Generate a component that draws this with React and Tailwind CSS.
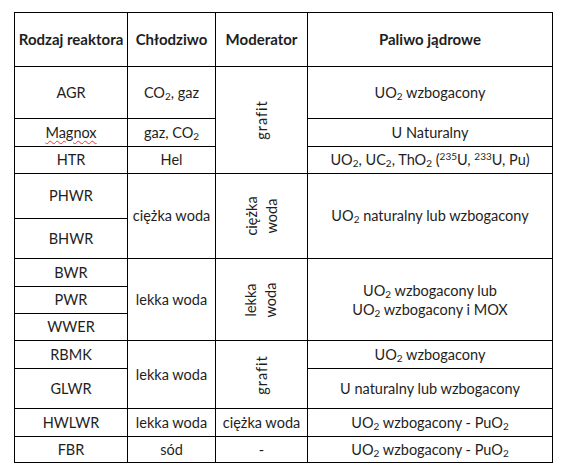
import React from "react";

const Sub = () => (
  <span className="relative top-[2px] text-[10px] leading-none">2</span>
);
const Sup = ({ children }) => (
  <span className="relative -top-[5px] text-[10px] leading-none">{children}</span>
);

const Cell = ({ className = "", children }) => (
  <div className={`bg-white flex items-center justify-center text-center ${className}`}>
    {children}
  </div>
);

const Vert = ({ className = "", children }) => (
  <div className={`-rotate-90 whitespace-nowrap text-center leading-[20px] ${className}`}>{children}</div>
);

export default function App() {
  return (
    <div className="w-[573px] h-[467px] bg-white pl-[14px] pt-[12px] text-[14.5px] text-[#1e1e1e] font-['Lato','Liberation_Sans',sans-serif]">
      <div className="grid w-[539px] bg-black p-px gap-px grid-cols-[112px_87px_91px_244px] grid-rows-[53px_51px_27px_26px_44px_39px_27px_26px_26px_27px_39px_27px_25px]">
        {/* header */}
        <Cell className="col-start-1 row-start-1 font-bold text-[15px]">Rodzaj reaktora</Cell>
        <Cell className="col-start-2 row-start-1 font-bold text-[15px]">Chłodziwo</Cell>
        <Cell className="col-start-3 row-start-1 font-bold text-[15px]">Moderator</Cell>
        <Cell className="col-start-4 row-start-1 font-bold text-[15px]">Paliwo jądrowe</Cell>

        {/* AGR / Magnox / HTR */}
        <Cell className="col-start-1 row-start-2">AGR</Cell>
        <Cell className="col-start-2 row-start-2">
          <span>CO<Sub />, gaz</span>
        </Cell>
        <Cell className="col-start-3 row-start-2 row-span-3">
          <Vert className="tracking-[1px]">grafit</Vert>
        </Cell>
        <Cell className="col-start-4 row-start-2">
          <span>UO<Sub /> wzbogacony</span>
        </Cell>

        <Cell className="col-start-1 row-start-3">
          <span className="underline decoration-wavy decoration-red-500 decoration-1 underline-offset-2">Magnox</span>
        </Cell>
        <Cell className="col-start-2 row-start-3">
          <span>gaz, CO<Sub /></span>
        </Cell>
        <Cell className="col-start-4 row-start-3">U Naturalny</Cell>

        <Cell className="col-start-1 row-start-4">HTR</Cell>
        <Cell className="col-start-2 row-start-4">Hel</Cell>
        <Cell className="col-start-4 row-start-4">
          <span>
            UO<Sub />, UC<Sub />, ThO<Sub /> (<Sup>235</Sup>U, <Sup>233</Sup>U, Pu)
          </span>
        </Cell>

        {/* PHWR / BHWR */}
        <Cell className="col-start-1 row-start-5">PHWR</Cell>
        <Cell className="col-start-1 row-start-6">BHWR</Cell>
        <Cell className="col-start-2 row-start-5 row-span-2">ciężka woda</Cell>
        <Cell className="col-start-3 row-start-5 row-span-2">
          <Vert>
            ciężka
            <br />
            woda
          </Vert>
        </Cell>
        <Cell className="col-start-4 row-start-5 row-span-2">
          <span>UO<Sub /> naturalny lub wzbogacony</span>
        </Cell>

        {/* BWR / PWR / WWER */}
        <Cell className="col-start-1 row-start-7">BWR</Cell>
        <Cell className="col-start-1 row-start-8">PWR</Cell>
        <Cell className="col-start-1 row-start-9">WWER</Cell>
        <Cell className="col-start-2 row-start-7 row-span-3">lekka woda</Cell>
        <Cell className="col-start-3 row-start-7 row-span-3">
          <Vert>
            lekka
            <br />
            woda
          </Vert>
        </Cell>
        <Cell className="col-start-4 row-start-7 row-span-3 flex-col gap-0">
          <div className="leading-[19px]">UO<Sub /> wzbogacony lub</div>
          <div className="leading-[19px]">UO<Sub /> wzbogacony i MOX</div>
        </Cell>

        {/* RBMK / GLWR */}
        <Cell className="col-start-1 row-start-10">RBMK</Cell>
        <Cell className="col-start-1 row-start-11">GLWR</Cell>
        <Cell className="col-start-2 row-start-10 row-span-2">lekka woda</Cell>
        <Cell className="col-start-3 row-start-10 row-span-2">
          <Vert className="tracking-[1px]">grafit</Vert>
        </Cell>
        <Cell className="col-start-4 row-start-10">
          <span>UO<Sub /> wzbogacony</span>
        </Cell>
        <Cell className="col-start-4 row-start-11">U naturalny lub wzbogacony</Cell>

        {/* HWLWR */}
        <Cell className="col-start-1 row-start-12">HWLWR</Cell>
        <Cell className="col-start-2 row-start-12">lekka woda</Cell>
        <Cell className="col-start-3 row-start-12">ciężka woda</Cell>
        <Cell className="col-start-4 row-start-12">
          <span>UO<Sub /> wzbogacony - PuO<Sub /></span>
        </Cell>

        {/* FBR */}
        <Cell className="col-start-1 row-start-13">FBR</Cell>
        <Cell className="col-start-2 row-start-13">sód</Cell>
        <Cell className="col-start-3 row-start-13">-</Cell>
        <Cell className="col-start-4 row-start-13">
          <span>UO<Sub /> wzbogacony - PuO<Sub /></span>
        </Cell>
      </div>
    </div>
  );
}
